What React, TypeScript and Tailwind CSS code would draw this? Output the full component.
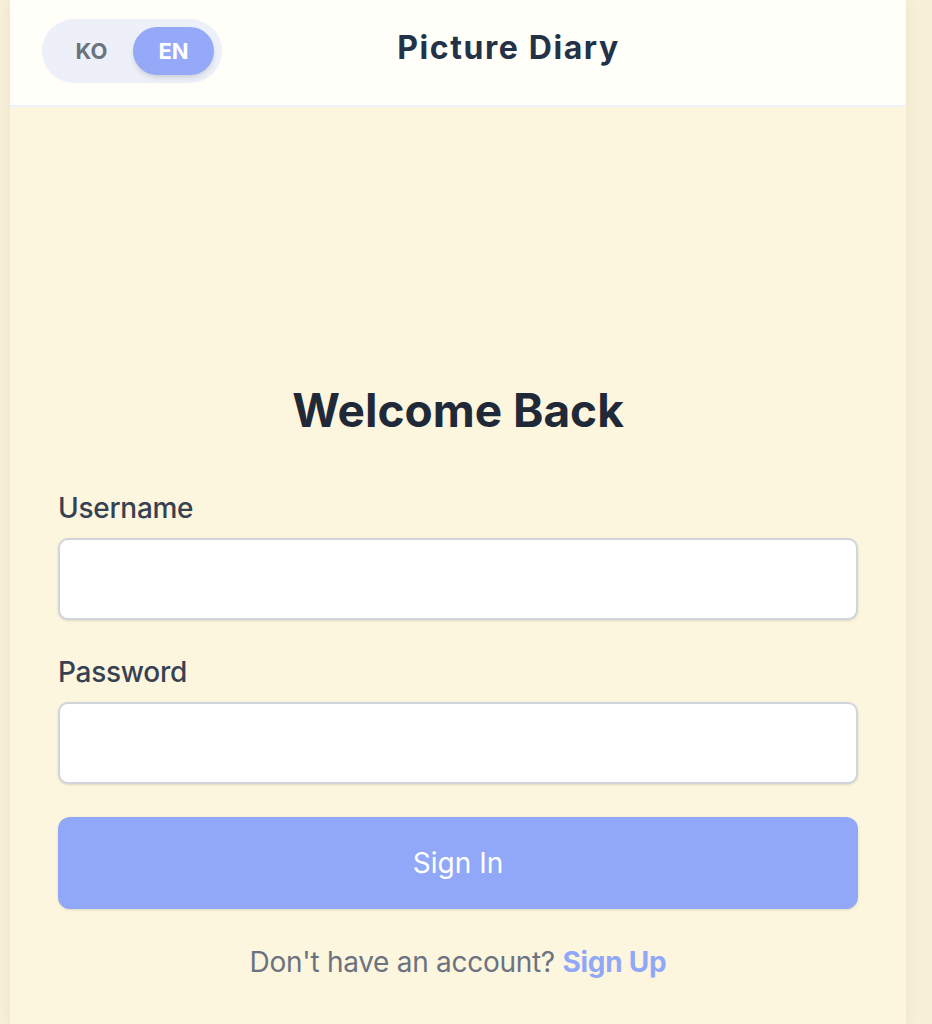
import { useState } from "react";

export default function App() {
    const [lang, setLang] = useState<'ko' | 'en'>('en');

    return (
        <div className="min-h-screen bg-[#f8f0d9] font-['Inter',sans-serif]">
            <div className="ml-[10px] w-[896px] min-h-screen bg-[#fdf6df] shadow-[0_0_12px_rgba(180,160,110,0.18)]">
                {/* Header */}
                <header className="flex h-[107px] items-center justify-between border-b-2 border-[#eef0fa] bg-[#fffef8] px-8">
                    <div className="mb-[3px] flex rounded-full bg-[#edf0f8] p-2">
                        <button
                            onClick={() => setLang('ko')}
                            className={`h-[48px] w-[83px] rounded-full text-[22px] font-bold ${lang === 'ko' ? 'bg-[#94a9f8] text-white shadow-md' : 'text-[#6b7280]'}`}
                        >
                            KO
                        </button>
                        <button
                            onClick={() => setLang('en')}
                            className={`h-[48px] w-[81px] rounded-full text-[22px] font-bold ${lang === 'en' ? 'bg-[#94a9f8] text-white shadow-md' : 'text-[#6b7280]'}`}
                        >
                            EN
                        </button>
                    </div>
                    <h1 className="mb-[9px] text-[32px] font-bold leading-[40px] tracking-[0.05em] text-[#243247]">Picture Diary</h1>
                    <div className="w-[79px]" />
                </header>

                {/* Login form */}
                <main className="px-12 pt-[279px] pb-10">
                    <h2 className="text-center text-[46px] font-bold leading-[48px] text-[#1f2937]">Welcome Back</h2>

                    <div className="mt-[54px]">
                        <label className="block text-[28px] font-medium leading-[40px] tracking-[-0.01em] text-[#374151]">Username</label>
                        <input type="text" className="mt-[10px] block h-[82px] w-full rounded-[10px] border-2 border-[#d1d5db] bg-white px-4 text-[28px] shadow-sm outline-none" />
                    </div>

                    <div className="mt-[32px]">
                        <label className="block text-[28px] font-medium leading-[40px] tracking-[-0.01em] text-[#374151]">Password</label>
                        <input type="password" className="mt-[10px] block h-[82px] w-full rounded-[10px] border-2 border-[#d1d5db] bg-white px-4 text-[28px] shadow-sm outline-none" />
                    </div>

                    <button className="mt-[33px] block h-[92px] w-full rounded-[12px] bg-[#91a8f8] text-[28px] text-white shadow-sm">
                        Sign In
                    </button>

                    <p className="mt-[33px] text-center text-[28px] leading-[40px] tracking-[-0.01em] text-[#6b7280]">
                        Don't have an account? <a className="font-bold text-[#91a8f8]">Sign Up</a>
                    </p>
                </main>
            </div>
        </div>
    );
}
